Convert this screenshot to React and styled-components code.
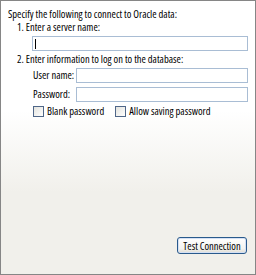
import React from "react";
import styled, { createGlobalStyle } from "styled-components";

const Global = createGlobalStyle`
  html, body { margin: 0; padding: 0; }
  body { width: 256px; height: 275px; overflow: hidden; }
`;

const Panel = styled.div`
  box-sizing: border-box;
  width: 256px;
  height: 275px;
  border: 1px solid #868686;
  background: linear-gradient(to bottom, #ffffff 0%, #ffffff 40%, #f1f0eb 70%, #f1f0eb 100%);
  font-family: "Open Sans", "Liberation Sans", Arial, sans-serif;
  font-stretch: 85%;
  font-size: 10.5px;
  color: #000;
  white-space: nowrap;
  display: flex;
  flex-direction: column;
  padding: 7px 7px 20px 7px;
`;

const Heading = styled.div`
  line-height: 13px;
`;

const Step = styled.div`
  margin-top: ${(p) => p.$top}px;
  padding-left: 9px;
  line-height: 13px;
`;

const Field = styled.div`
  box-sizing: border-box;
  height: 15px;
  border: 1px solid #a9bdd4;
  background: #fff;
  flex: 1;
  position: relative;
`;

const Caret = styled.span`
  position: absolute;
  left: 2px;
  top: 2px;
  width: 1px;
  height: 10px;
  background: #000;
`;

const Row = styled.div`
  padding-left: ${(p) => p.$indent}px;
  margin-top: ${(p) => p.$top}px;
  display: flex;
  align-items: center;
`;

const Label = styled.span`
  width: 43px;
  line-height: 13px;
`;

const Check = styled.label`
  display: flex;
  align-items: center;
  gap: 3px;
  margin-right: ${(p) => p.$gap || 0}px;
  line-height: 13px;
`;

const Box = styled.span`
  box-sizing: border-box;
  width: 11px;
  height: 11px;
  border: 1px solid #4f6688;
  background: linear-gradient(135deg, #e3e3de 0%, #ffffff 100%);
`;

const Footer = styled.div`
  margin-top: auto;
  display: flex;
  justify-content: flex-end;
  padding-right: 1px;
`;

const Button = styled.button`
  box-sizing: border-box;
  height: 17px;
  width: 70px;
  padding: 0;
  border: 1px solid #2a5a8c;
  border-radius: 3px;
  background: linear-gradient(to bottom, #ffffff 0%, #f4f4f0 70%, #dedbd2 100%);
  box-shadow: inset 0 0 0 1px #d4e0f4;
  font-family: inherit;
  font-stretch: 85%;
  font-size: 10.5px;
  color: #000;
  line-height: 12px;
  white-space: nowrap;
`;

export default function App() {
  return (
    <>
      <Global />
      <Panel>
        <Heading>Specify the following to connect to Oracle data:</Heading>
        <Step $top={0}>1. Enter a server name:</Step>
        <Row $indent={24} $top={2}>
          <Field>
            <Caret />
          </Field>
        </Row>
        <Step $top={2}>2. Enter information to log on to the database:</Step>
        <Row $indent={25} $top={2}>
          <Label>User name:</Label>
          <Field />
        </Row>
        <Row $indent={25} $top={4}>
          <Label>Password:</Label>
          <Field />
        </Row>
        <Row $indent={25} $top={3}>
          <Check $gap={11}>
            <Box />
            Blank password
          </Check>
          <Check>
            <Box />
            Allow saving password
          </Check>
        </Row>
        <Footer>
          <Button>Test Connection</Button>
        </Footer>
      </Panel>
    </>
  );
}
